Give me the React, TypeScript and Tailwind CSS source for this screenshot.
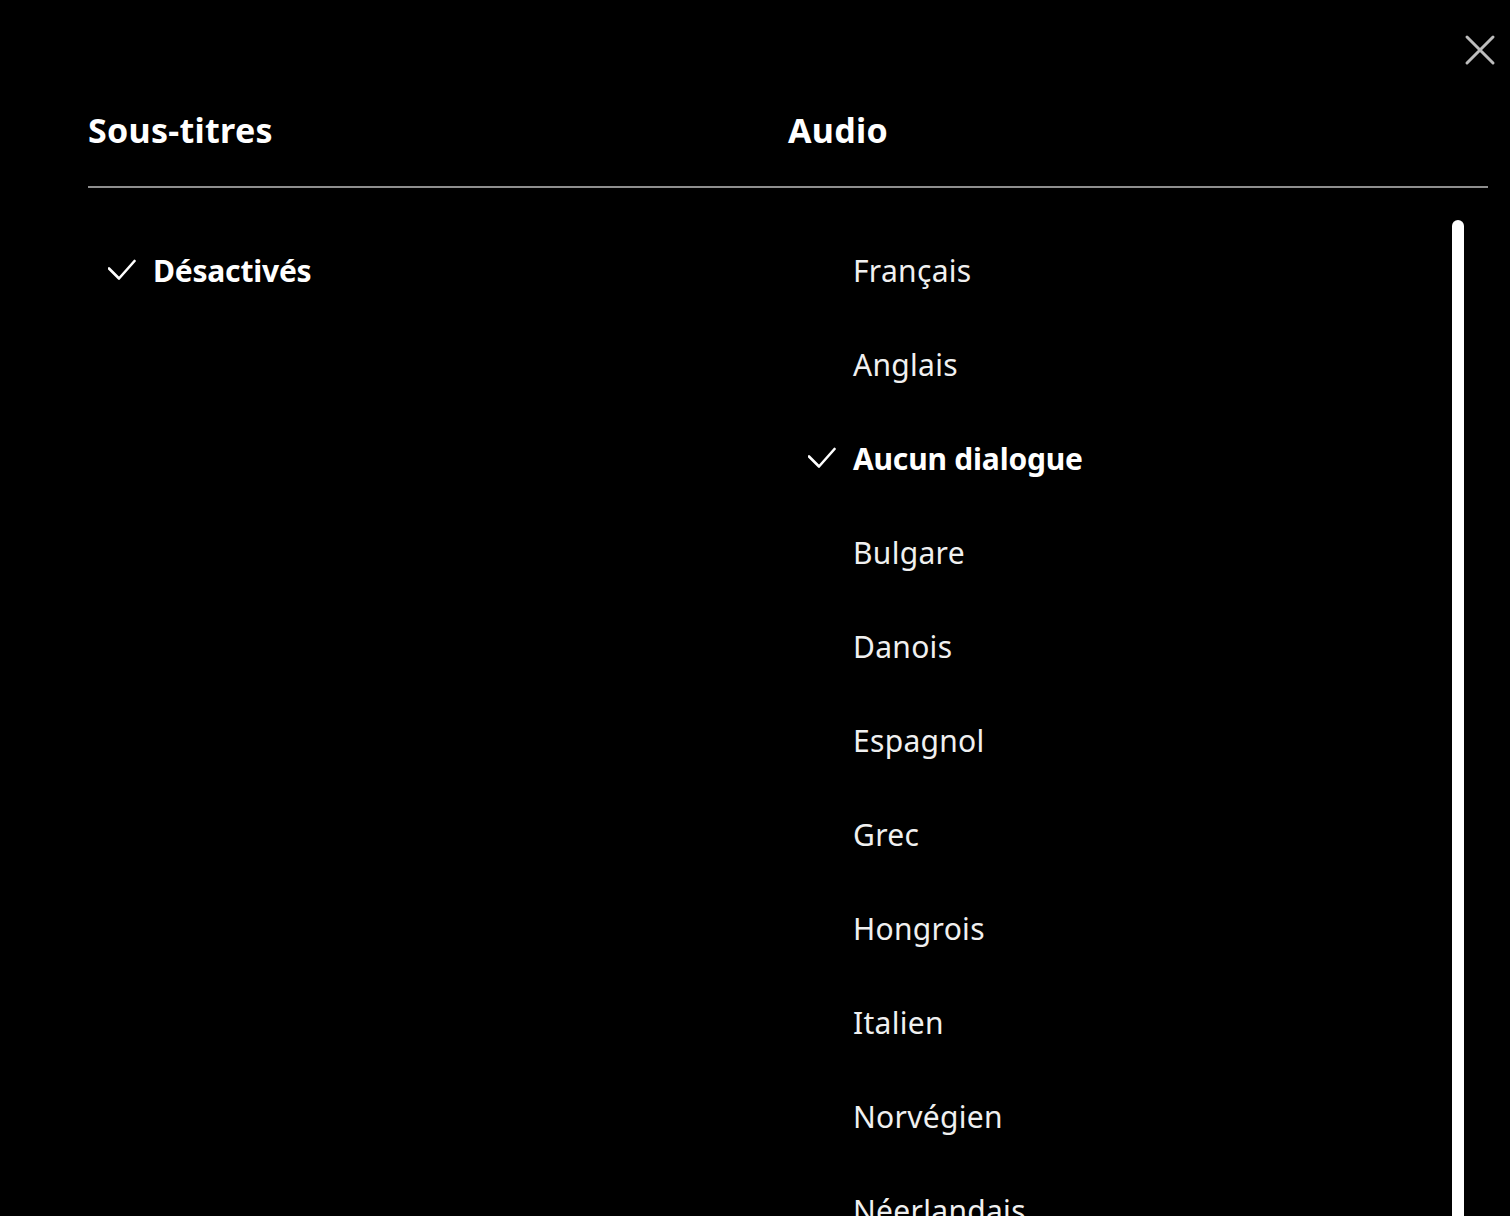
import { useState } from 'react';

const subtitleOptions = ['Désactivés'];

const audioOptions = [
  'Français',
  'Anglais',
  'Aucun dialogue',
  'Bulgare',
  'Danois',
  'Espagnol',
  'Grec',
  'Hongrois',
  'Italien',
  'Norvégien',
  'Néerlandais',
];

function CheckIcon() {
  return (
    <svg className="w-[28px] h-[28px] shrink-0" viewBox="0 0 28 28" fill="none">
      <path
        d="M1 12.5L11 22.5L26.5 5"
        stroke="white"
        strokeWidth={2.6}
        strokeLinecap="round"
        strokeLinejoin="round"
      />
    </svg>
  );
}

interface OptionListProps {
  options: string[];
  selected: string;
  onSelect: (value: string) => void;
}

function OptionList({ options, selected, onSelect }: OptionListProps) {
  return (
    <ul className="pt-[35px]">
      {options.map((option) => {
        const active = option === selected;
        return (
          <li key={option}>
            <button
              onClick={() => onSelect(option)}
              className="flex items-center h-[94px] pl-[20px] gap-[17px] text-left w-full"
            >
              {active ? <CheckIcon /> : <span className="w-[28px] shrink-0" />}
              <span
                className={
                  active
                    ? 'text-[30px] font-bold text-white tracking-[-0.2px]'
                    : 'text-[30px] font-normal text-[#f0f0f0] tracking-[0.3px]'
                }
              >
                {option}
              </span>
            </button>
          </li>
        );
      })}
    </ul>
  );
}

export default function App() {
  const [subtitle, setSubtitle] = useState('Désactivés');
  const [audio, setAudio] = useState('Aucun dialogue');

  return (
    <div
      className="relative h-[1216px] overflow-hidden bg-black text-white"
      style={{ fontFamily: '"Noto Sans", "Open Sans", sans-serif' }}
    >
      <button className="absolute top-[34px] right-[14px] w-[32px] h-[32px]" aria-label="Fermer">
        <svg viewBox="0 0 32 32" className="w-full h-full" fill="none">
          <path d="M3 3L29 29M29 3L3 29" stroke="#bdbdbd" strokeWidth={3} strokeLinecap="round" />
        </svg>
      </button>

      <div className="pl-[88px] pr-[22px] pt-[107px]">
        <div className="grid grid-cols-2 border-b-2 border-[#8e8e8e] pb-[33px]">
          <h2 className="text-[34px] leading-[46px] font-bold tracking-[0.3px]">Sous-titres</h2>
          <h2 className="text-[34px] leading-[46px] font-bold tracking-[0.3px]">Audio</h2>
        </div>

        <div className="grid grid-cols-2">
          <OptionList options={subtitleOptions} selected={subtitle} onSelect={setSubtitle} />
          <div className="flex">
            <div className="flex-1">
              <OptionList options={audioOptions} selected={audio} onSelect={setAudio} />
            </div>
            <div className="w-[12px] mt-[32px] mr-[24px] rounded-t-full bg-white self-stretch" />
          </div>
        </div>
      </div>
    </div>
  );
}
